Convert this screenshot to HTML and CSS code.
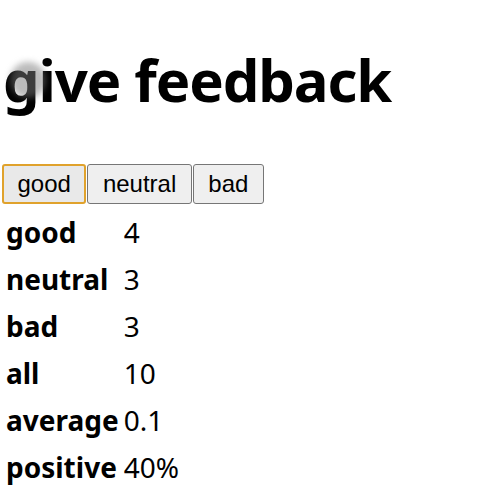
FILE: index.html
```html
<!DOCTYPE html>
<html lang="en">
    <head>
        <meta charset="UTF-8">
        <meta name="viewport" content="width=device-width, initial-scale=1.0">
        <title>unicafe</title>
        <link rel="stylesheet" href="styles.css">
    </head>
    <body>
        <div id="root">
            <h1 class="title">give feedback</h1>

            <div class="buttons">
                <button class="btn focused">good</button>
                <button class="btn">neutral</button>
                <button class="btn">bad</button>
            </div>

            <table class="stats">
                <tbody>
                    <tr><th>good</th><td>4</td></tr>
                    <tr><th>neutral</th><td>3</td></tr>
                    <tr><th>bad</th><td>3</td></tr>
                    <tr><th>all</th><td>10</td></tr>
                    <tr><th>average</th><td>0.1</td></tr>
                    <tr><th>positive</th><td>40%</td></tr>
                </tbody>
            </table>
        </div>

        <!-- touch indicator left over from the screen capture -->
        <div class="touch"></div>
    </body>
</html>
```

FILE: styles.css
```css
body {
    margin: 0;
    padding: 0 2px;
    background-color: #fff;
    color: #000;
    font-family: "Noto Sans", "Open Sans", sans-serif;
}
.title {
    margin: 0;
    padding-top: 40px;
    padding-left: 1px;
    font-size: 58px;
    font-weight: 700;
    line-height: 80px;
    letter-spacing: -1.1px;
}
.buttons {
    display: flex;
    gap: 1px;
    margin-top: 44px;
}
.btn {
    height: 40px;
    padding: 0 14.5px;
    font-family: "Liberation Sans", Arial, sans-serif;
    font-size: 24px;
    color: #000;
    background-color: #efefef;
    border: 1px solid #767676;
    border-radius: 3px;
}
.focused {
    padding: 0 13.5px;
    border: 2px solid #e0a22c;
    background-color: #e9e9e9;
}
.stats {
    margin-top: 3px;
    border-spacing: 3px;
    font-size: 28px;
}
.stats th {
    padding: 2px 1px;
    line-height: 40px;
    text-align: left;
    font-weight: 700;
}
.stats td {
    padding: 2px 1px;
    line-height: 40px;
}
.touch {
    position: absolute;
    left: 10px;
    top: 62px;
    width: 36px;
    height: 36px;
    border-radius: 50%;
    background-color: rgba(120, 120, 120, 0.5);
    filter: blur(3px);
}
```
